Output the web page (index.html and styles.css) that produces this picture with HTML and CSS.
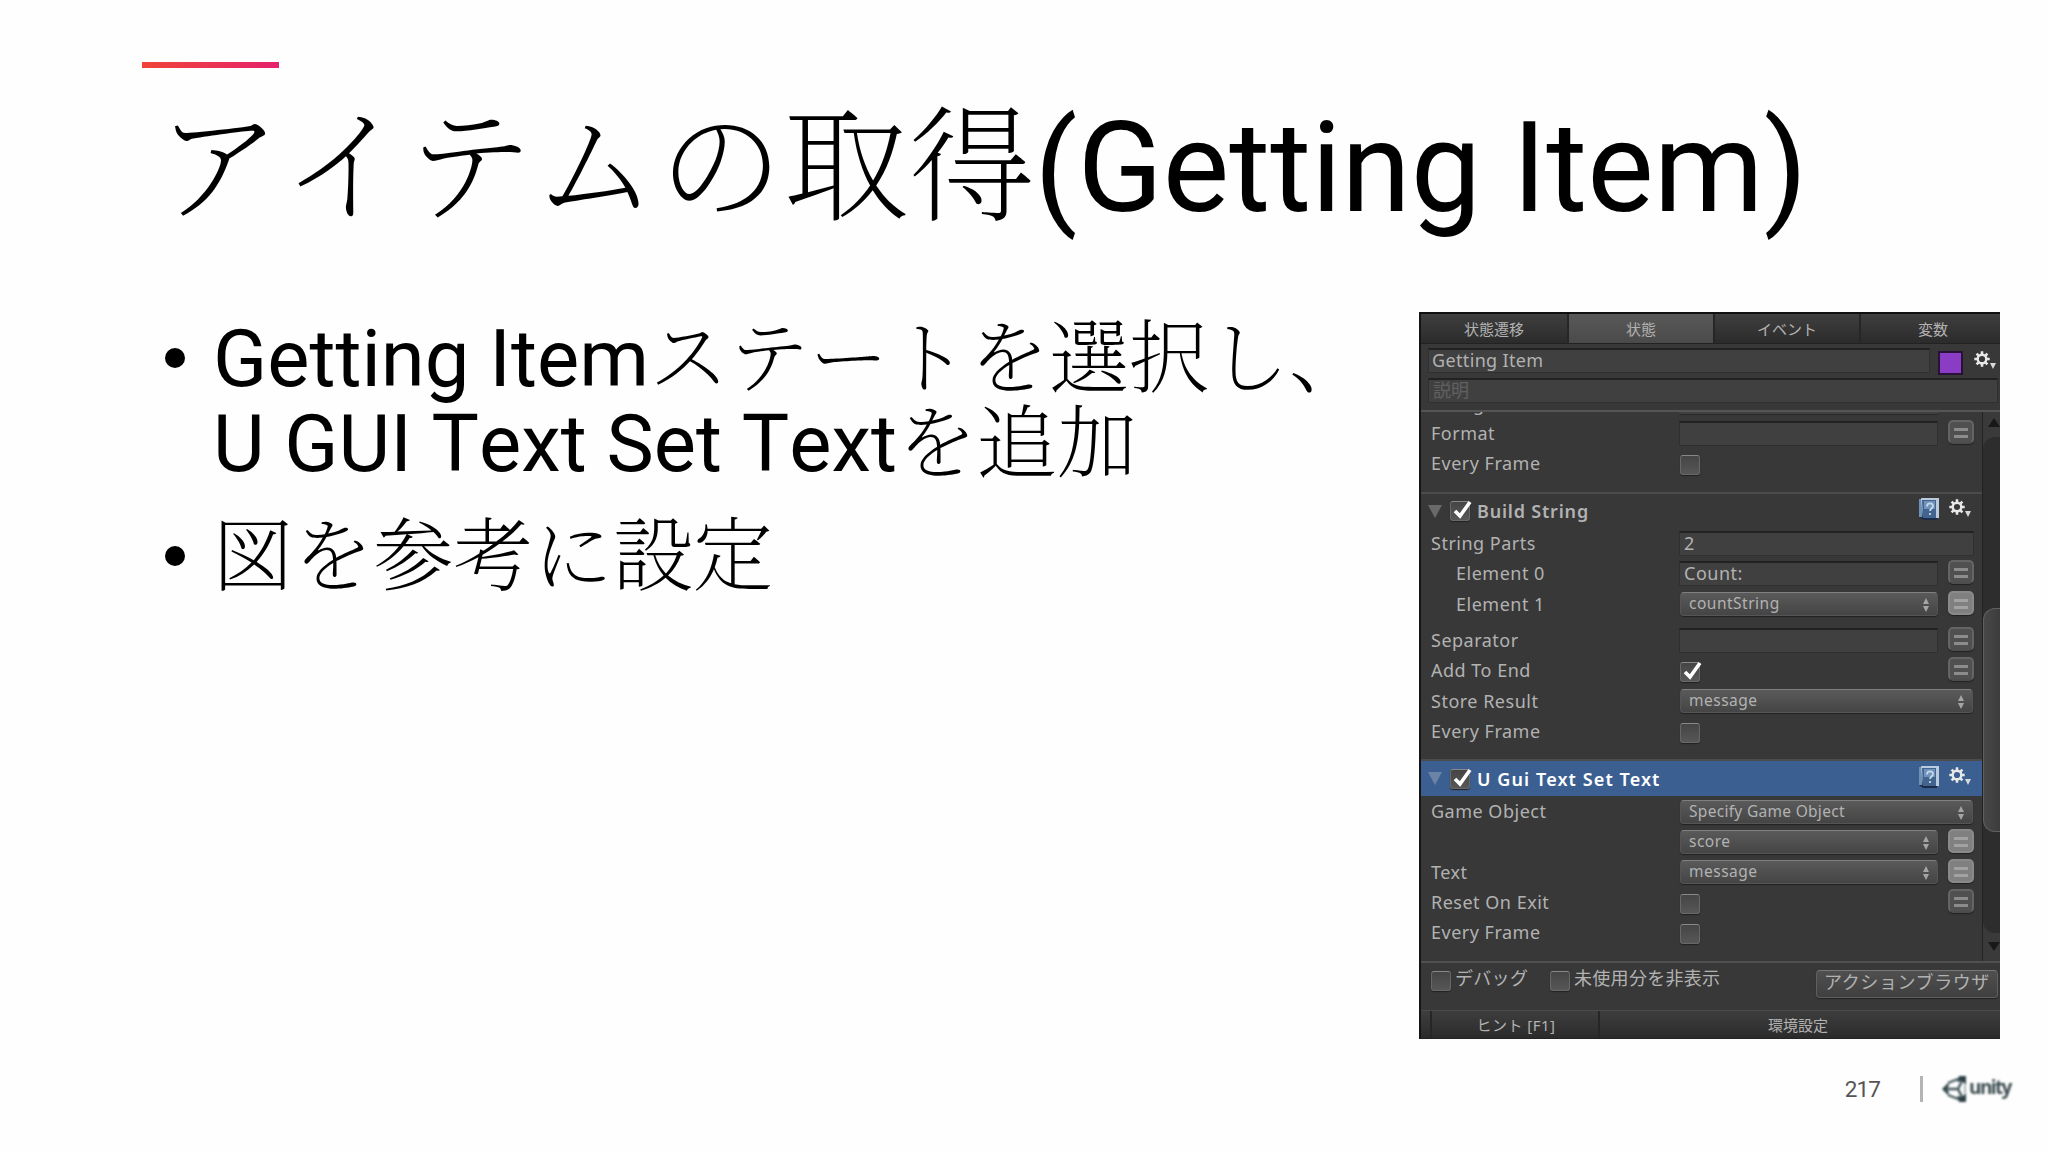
FILE: index.html
```html
<!DOCTYPE html>
<html lang="ja">
<head>
  <meta charset="UTF-8">
  <title>アイテムの取得(Getting Item)</title>
  <link rel="stylesheet" href="styles.css">
</head>
<body>
  <svg width="0" height="0" class="defs">
    <symbol id="gear" viewBox="0 0 24 20">
      <g stroke="#e8e8e8" fill="none">
        <circle cx="8" cy="8" r="4.3" stroke-width="2.400"/>
        <path stroke-width="2.600" d="M8 .3v3M8 12.700v3M.3 8h3M12.700 8h3M2.600 2.600l2 2M11.400 11.400l2 2M2.600 13.400l2-2M11.400 4.600l2-2"/>
      </g>
      <path fill="#d8d8d8" d="M16 12h6l-3 6z"/>
    </symbol>
    <symbol id="book" viewBox="0 0 22 24">
      <path fill="#1c2c46" d="M1 3l4-2 14 20v2H5l-4-3z"/>
      <path fill="#6f91b8" d="M1 2h3v18H1z"/>
      <path fill="#b9cbdc" d="M3 1h18v20H5z"/>
      <path fill="#43648f" d="M4 3h14v18H5z"/>
      <path fill="#7192ba" d="M6 4h11v8H6z"/>
      <path fill="none" stroke="#c5d7e8" stroke-width="1.800" d="M9 9.500c0-4 6-4 6-.5 0 2.500-3 2.500-3 5M12 16v2"/>
    </symbol>
    <symbol id="check" viewBox="0 0 24 24">
      <path fill="none" stroke="#fff" stroke-width="3.600" d="M5 13l5 5L20 4"/>
    </symbol>
    <symbol id="updown" viewBox="0 0 8 14">
      <path fill="#a5a5a5" d="M4 0l3 6H1zM1 8h6l-3 6z"/>
    </symbol>
  </svg>

  <div class="slide">
    <div class="accent"></div>
    <h1><span class="ja">アイテムの取得</span>(Getting Item)</h1>

    <div class="content">
      <ul>
        <li>Getting Item<span class="ja">ステートを選択し、</span><br>U GUI Text Set Text<span class="ja">を追加</span></li>
        <li><span class="ja">図を参考に設定</span></li>
      </ul>

      <div class="panel">
        <div class="tabs">
          <div class="tab">状態遷移</div>
          <div class="tab active">状態</div>
          <div class="tab">イベント</div>
          <div class="tab">変数</div>
        </div>

        <div class="state">
          <div class="state-name">
            <div class="field">Getting Item</div>
            <div class="swatch"></div>
            <svg class="gear"><use href="#gear"/></svg>
          </div>
          <div class="field desc">説明</div>
        </div>

        <div class="scroll">
          <div class="actions">
            <div class="action first">
              <div class="cut"><span>String</span><i></i></div>
              <div class="row"><label>Format</label><div class="field"></div><i class="eq"></i></div>
              <div class="row"><label>Every Frame</label><i class="box"></i></div>
            </div>

            <div class="action build">
              <div class="head">
                <i class="fold"></i><i class="box"><svg><use href="#check"/></svg></i>
                <b>Build String</b>
                <svg class="book"><use href="#book"/></svg><svg class="gear"><use href="#gear"/></svg>
              </div>
              <div class="row"><label>String Parts</label><div class="field wide">2</div></div>
              <div class="row"><label class="sub">Element 0</label><div class="field">Count:</div><i class="eq"></i></div>
              <div class="row tall"><label class="sub">Element 1</label><div class="select">countString<svg><use href="#updown"/></svg></div><i class="eq on"></i></div>
              <div class="row gap"><label>Separator</label><div class="field"></div><i class="eq"></i></div>
              <div class="row"><label>Add To End</label><i class="box"><svg><use href="#check"/></svg></i><i class="eq"></i></div>
              <div class="row tall"><label>Store Result</label><div class="select wide">message<svg><use href="#updown"/></svg></div></div>
              <div class="row"><label>Every Frame</label><i class="box"></i></div>
            </div>

            <div class="action selected">
              <div class="head">
                <i class="fold"></i><i class="box"><svg><use href="#check"/></svg></i>
                <b>U Gui Text Set Text</b>
                <svg class="book"><use href="#book"/></svg><svg class="gear"><use href="#gear"/></svg>
              </div>
              <div class="row first-row"><label>Game Object</label><div class="select wide">Specify Game Object<svg><use href="#updown"/></svg></div></div>
              <div class="row"><label></label><div class="select">score<svg><use href="#updown"/></svg></div><i class="eq on"></i></div>
              <div class="row"><label>Text</label><div class="select">message<svg><use href="#updown"/></svg></div><i class="eq on"></i></div>
              <div class="row"><label>Reset On Exit</label><i class="box"></i><i class="eq"></i></div>
              <div class="row"><label>Every Frame</label><i class="box"></i></div>
            </div>
          </div>
          <div class="scrollbar">
            <i class="up"></i>
            <div class="track"><div class="thumb"></div></div>
            <i class="down"></i>
          </div>
        </div>

        <div class="options">
          <i class="box"></i><span class="debug">デバッグ</span>
          <i class="box"></i><span>未使用分を非表示</span>
          <div class="button">アクションブラウザ</div>
        </div>

        <div class="bottom">
          <div class="stub"></div>
          <div class="hint">ヒント [F1]</div>
          <div class="prefs">環境設定</div>
        </div>
      </div>
    </div>

    <div class="footer">
      <span class="page">217</span>
      <i class="rule"></i>
      <div class="logo">
        <svg width="25" height="26" viewBox="0 0 25 26">
          <path fill="#2c4045" d="M17 0h7v9l-4-4-5 1zM17 26h7v-9l-4 4-5-1zM0 13l6-6 1 3-3 3 3 3-1 3z"/>
          <path fill="none" stroke="#42565b" stroke-width="2.400" d="M6 7l10-4M6 19l10 4M4 13h12M16 13l4-8M16 13l4 8"/>
          <path fill="none" stroke="#8d9b9e" stroke-width="1.500" d="M23 9v8"/>
        </svg>
        <span>unity</span>
      </div>
    </div>
  </div>
</body>
</html>
```
FILE: styles.css
```css
*, *::before { box-sizing: border-box; }
body {
  margin: 0;
  background: #fefefe;
  font-family: Roboto, "Noto Sans CJK JP", sans-serif;
  color: #000;
}
.defs { position: absolute; }
.slide {
  width: 2048px;
  height: 1152px;
  overflow: hidden;
  display: flex;
  flex-direction: column;
}
.accent {
  width: 137px;
  height: 6px;
  margin: 62px 0 0 142px;
  background: linear-gradient(90deg, #f04438, #e5216c);
  flex: none;
}
h1 {
  margin: 21px 0 0 156px;
  height: 160px;
  line-height: 160px;
  font-size: 125.300px;
  font-weight: 400;
  white-space: nowrap;
}
.ja {
  font-family: "Hiragino Mincho ProN", "Yu Mincho", "Noto Serif CJK JP", "Noto Sans CJK JP", serif;
  font-weight: 200;
  line-height: 0;
  font-kerning: none;
}
h1 .ja { font-size: 125.500px; }
li .ja { font-size: 80px; }
.content {
  display: flex;
  justify-content: space-between;
  margin: 63px 48px 0 163px;
  height: 727px;
}
ul {
  list-style: none;
  margin: 4px 0 0;
  padding: 0;
  font-size: 79.600px;
  line-height: 85px;
  font-kerning: none;
  white-space: nowrap;
}
li { position: relative; padding-left: 50px; margin-bottom: 28px; }
li::before {
  content: "";
  position: absolute;
  left: 2px;
  top: 32px;
  width: 20px;
  height: 20px;
  border-radius: 50%;
  background: #000;
}

/* inspector */
.panel {
  width: 581px;
  height: 727px;
  overflow: hidden;
  background: #383838;
  border-left: 2px solid #151515;
  border-top: 2px solid #111;
  border-bottom: 1px solid #222;
  color: #b2b2b2;
  font: 18px/24px "Noto Sans", "Noto Sans CJK JP", sans-serif;
  letter-spacing: .5px;
  white-space: nowrap;
  display: flex;
  flex-direction: column;
}
.tabs { display: flex; height: 30px; flex: none; }
.tab {
  width: 146px;
  flex: none;
  text-align: center;
  font-size: 15px;
  line-height: 30px;
  letter-spacing: 0;
  background: linear-gradient(#3f3f3f, #2b2b2b);
  border-right: 2px solid #262626;
  border-bottom: 1px solid #222;
}
.tab.active { background: linear-gradient(#595959, #4a4a4a); }
.tab:first-child { width: 148px; }
.state {
  height: 68px;
  flex: none;
  padding: 4px 0 0 7px;
  border-bottom: 2px solid #555;
}
.state-name { display: flex; height: 30px; }
.state-name .field { width: 502px; padding-left: 3px; letter-spacing: .35px; }
.field {
  width: 259px;
  height: 25px;
  padding-left: 4px;
  line-height: 21px;
  background: #404040;
  border: 1px solid #303030;
  border-top: 2px solid #222;
}
.field.desc { width: 570px; color: #606060; letter-spacing: 0; }
.swatch {
  width: 25px;
  height: 24px;
  margin: 3px 6px 0 8px;
  background: #8a3cc4;
  border: 2px solid #281238;
}
.gear { width: 24px; height: 20px; }
.state-name .gear { margin: 3px 0 0 5px; }
.scroll { display: flex; height: 549px; flex: none; }
.actions { width: 561px; }
.action { border-bottom: 2px solid #4c4c4c; }
.first { height: 82px; }
.build { height: 267px; }
.selected { height: 200px; border-bottom: 0; }
.cut { height: 6px; overflow: hidden; display: flex; align-items: flex-end; padding-left: 10px; }
.cut span { width: 248px; line-height: 20px; margin-bottom: 4px; }
.cut i { width: 259px; height: 3px; margin-bottom: 3px; background: #404040; border-bottom: 1px solid #2a2a2a; }
.head { display: flex; height: 34px; align-items: center; padding: 0 9px 0 7px; }
.head b { flex: 1; padding-left: 7px; font-weight: 600; letter-spacing: 1.100px; }
.build .head b { letter-spacing: .8px; }
.selected .head { height: 35px; background: #3c5f92; color: #fff; }
.fold {
  margin-right: 8px;
  border: 7px solid transparent;
  border-top: 13px solid #6a6a6a;
  border-bottom: 0;
}
.selected .fold { border-top-color: #6b83a5; }
.book { width: 22px; height: 24px; margin: 0 9px 4px 0; }
.head .gear { margin-top: -4px; }
.row {
  display: flex;
  height: 30px;
  align-items: center;
  padding: 0 8px 0 10px;
}
.row.tall { height: 31px; }
.row.first-row { height: 31px; }
.row.gap { margin-top: 6px; }
.row label { width: 248px; flex: none; padding-bottom: 1px; }
.row.tall label { padding: 1px 0 0; }
.row label.sub { padding-left: 25px; }
.row .field.wide { width: 295px; }
.box {
  width: 20px;
  height: 20px;
  flex: none;
  border-radius: 3px;
  background: linear-gradient(#454545, #575757);
  border: 1px solid #686868;
  border-top-color: #888;
  box-shadow: 0 1px 1px #222;
}
.box svg { display: block; width: 24px; height: 24px; margin: -4px 0 0 -1px; }
.row .box { margin: 4px 0 0 1px; }
.select {
  position: relative;
  width: 258px;
  height: 24px;
  margin-left: 1px;
  padding-left: 8px;
  font-size: 15.500px;
  line-height: 20px;
  letter-spacing: .5px;
  background: linear-gradient(#5a5a5a, #454545);
  border: 1px solid #555;
  border-top-color: #808080;
  border-radius: 4px;
  box-shadow: 0 1px 1px #222;
}
.select.wide { width: 293px; }
.first-row .select { letter-spacing: .3px; }
.select svg { position: absolute; right: 7px; top: 5px; width: 8px; height: 14px; }
.eq {
  position: relative;
  width: 26px;
  height: 24px;
  margin: 0 0 2px auto;
  flex: none;
  border-radius: 5px;
  border: 2px solid #656565;
  border-bottom-color: #4d4d4d;
  background: #505050;
  box-shadow: 0 1px 1px #222;
}
.eq::before {
  content: "";
  position: absolute;
  left: 4px;
  top: 6px;
  width: 14px;
  height: 10px;
  border: solid #8c8c8c;
  border-width: 3px 0;
}
.eq.on { background: #808080; border-color: #8a8a8a; }
.eq.on::before { border-color: #a2a2a2; }
.scrollbar {
  width: 18px;
  border-left: 1px solid #222;
  background: #3a3a3a;
  display: flex;
  flex-direction: column;
  align-items: center;
}
.up { margin: 6px 0 10px 5px; border: 6px solid transparent; border-bottom: 9px solid #181818; border-top: 0; }
.down { margin: 9px 0 0 5px; border: 6px solid transparent; border-top: 9px solid #181818; border-bottom: 0; }
.track {
  width: 100%;
  height: 496px;
  padding-top: 171px;
  background: #2d2d2d;
  border-radius: 12px 0 0 12px;
}
.thumb {
  height: 224px;
  background: linear-gradient(90deg, #484848, #3c3c3c);
  border: 1px solid #606060;
  border-right: 0;
  border-radius: 12px 0 0 12px;
}
.options {
  display: flex;
  height: 49px;
  flex: none;
  padding: 7px 2px 0 10px;
  border-top: 2px solid #505050;
}
.options span { margin-left: 4px; letter-spacing: .3px; line-height: 17px; }
.options .debug { width: 95px; }
.button {
  width: 182px;
  height: 28px;
  margin-left: auto;
  text-align: center;
  line-height: 22px;
  letter-spacing: .6px;
  border-radius: 4px;
  border: 1px solid #606060;
  border-top-color: #777;
  background: linear-gradient(#505050, #3f3f3f);
  box-shadow: 0 1px 1px #222;
}
.options .box { margin-top: 1px; }
.bottom {
  display: flex;
  flex: 1;
  font-size: 15px;
  line-height: 28px;
  letter-spacing: 0;
  text-align: center;
  background: linear-gradient(#3e3e3e, #2a2a2a);
  border-top: 1px solid #4a4a4a;
}
.stub { width: 11px; border-right: 2px solid #262626; }
.hint { width: 168px; border-right: 2px solid #262626; letter-spacing: .5px; padding-left: 2px; }
.prefs { flex: 1; padding-right: 4px; }

.footer {
  display: flex;
  align-items: center;
  justify-content: flex-end;
  height: 28px;
  margin: 36px 36px 0 0;
}
.page { font-size: 22.500px; color: #555; letter-spacing: -.9px; }
.rule { width: 3px; height: 26px; margin: 0 19px 0 40px; background: #b4b4b4; }
.logo { display: flex; align-items: center; width: 70px; filter: blur(.9px); }
.logo span {
  margin: -5px 0 0 2px;
  font: 700 19px/24px "Open Sans", sans-serif;
  letter-spacing: -1.600px;
  color: #3c4c50;
}
```
